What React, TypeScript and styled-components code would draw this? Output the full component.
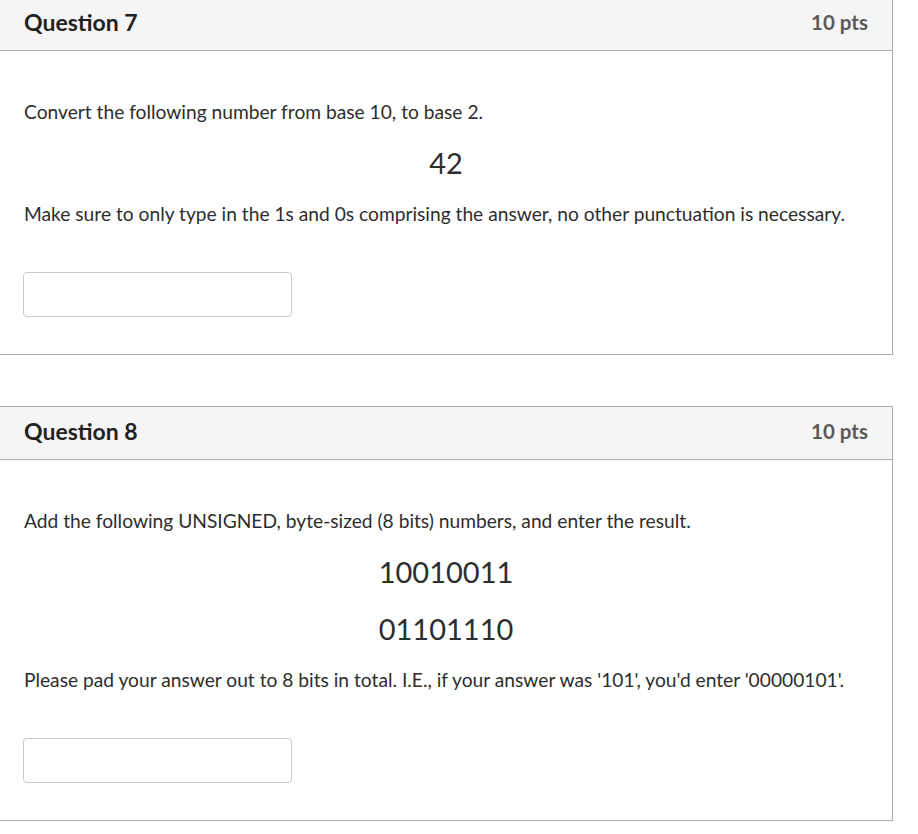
import React from "react";
import styled, { createGlobalStyle } from "styled-components";

const Global = createGlobalStyle`
  html, body { margin: 0; padding: 0; background: #ffffff; }
  body { font-family: Lato, "Open Sans", "Liberation Sans", sans-serif; color: #2d2d2d; }
  * { box-sizing: border-box; }
`;

const Page = styled.div`
  display: flex;
  flex-direction: column;
  gap: 51px;
  margin-top: -3px;
  margin-left: -1px;
  width: 894px;
`;

const Card = styled.section`
  border: 1px solid #aeaeae;
  background: #fff;
`;

const Header = styled.header`
  display: flex;
  align-items: center;
  justify-content: space-between;
  height: 53px;
  padding: 0 24px 4px;
  background: #f5f5f5;
  border-bottom: 1px solid #aeaeae;
`;

const Title = styled.h2`
  margin: 0;
  font-size: 23px;
  font-weight: 700;
  color: #222;
`;

const Points = styled.span`
  font-size: 20.5px;
  font-weight: 700;
  color: #5a5a5a;
`;

const Body = styled.div`
  display: flex;
  flex-direction: column;
  gap: 15px;
  padding: 46px 24px 37px;
`;

const Text = styled.p`
  margin: 0;
  font-size: 19.2px;
  line-height: 30px;
  color: #2d2d2d;
`;

const Number = styled.p`
  margin: 0;
  font-size: 29px;
  line-height: 42px;
  text-align: center;
  color: #2d2d2d;
`;

const Answer = styled.input`
  margin: 28px 0 0 -1px;
  width: 269px;
  height: 45px;
  border: 1px solid #c9c9c9;
  border-radius: 4px;
  background: #fff;
  outline: none;
`;

type Q = { title: string; points: string; parts: { kind: "text" | "num"; value: string }[] };

const questions: Q[] = [
  {
    title: "Question 7",
    points: "10 pts",
    parts: [
      { kind: "text", value: "Convert the following number from base 10, to base 2." },
      { kind: "num", value: "42" },
      {
        kind: "text",
        value:
          "Make sure to only type in the 1s and 0s comprising the answer, no other punctuation is necessary.",
      },
    ],
  },
  {
    title: "Question 8",
    points: "10 pts",
    parts: [
      { kind: "text", value: "Add the following UNSIGNED, byte-sized (8 bits) numbers, and enter the result." },
      { kind: "num", value: "10010011" },
      { kind: "num", value: "01101110" },
      {
        kind: "text",
        value: "Please pad your answer out to 8 bits in total. I.E., if your answer was '101', you'd enter '00000101'.",
      },
    ],
  },
];

export default function App() {
  return (
    <>
      <Global />
      <Page>
        {questions.map((q) => (
          <Card key={q.title}>
            <Header>
              <Title>{q.title}</Title>
              <Points>{q.points}</Points>
            </Header>
            <Body>
              {q.parts.map((p, i) =>
                p.kind === "text" ? <Text key={i}>{p.value}</Text> : <Number key={i}>{p.value}</Number>
              )}
              <Answer type="text" aria-label="answer" />
            </Body>
          </Card>
        ))}
      </Page>
    </>
  );
}
